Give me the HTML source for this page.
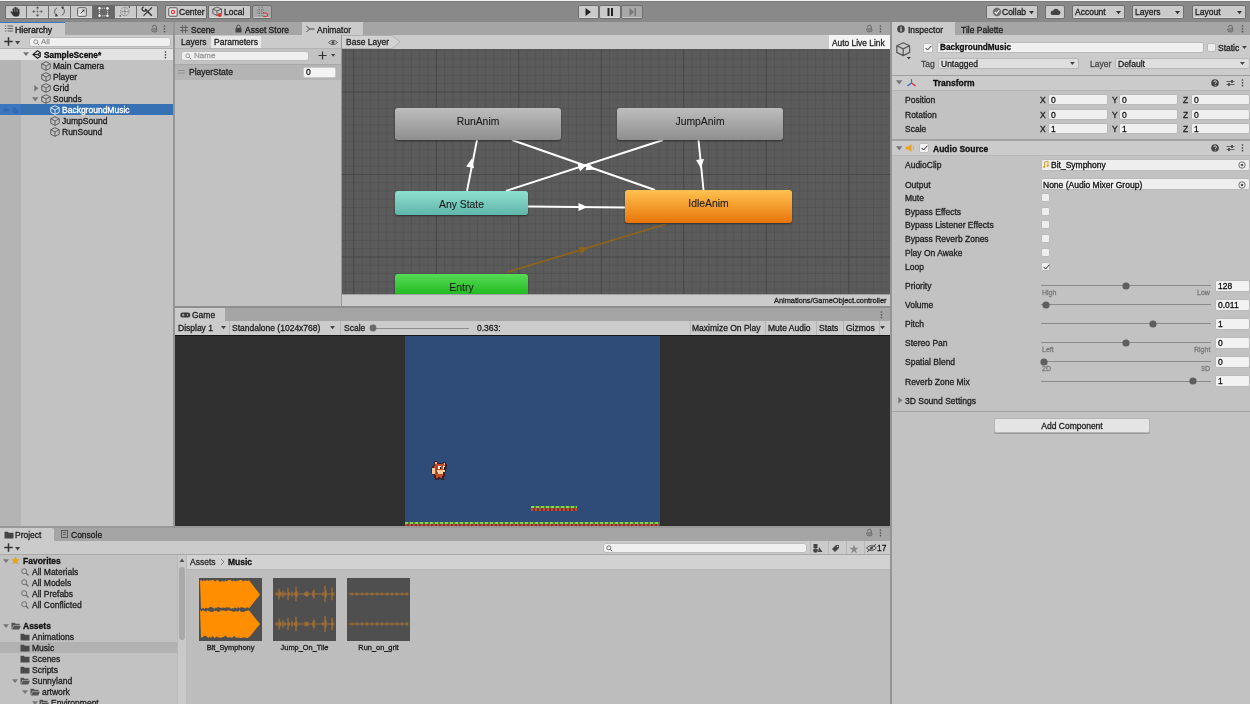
<!DOCTYPE html>
<html><head><meta charset="utf-8">
<style>
*{margin:0;padding:0;box-sizing:border-box}
html,body{width:1250px;height:704px;overflow:hidden;background:#c2c2c2;font-family:"Liberation Sans",sans-serif;font-size:8.5px;color:#111}
.a{position:absolute}
.t{position:absolute;white-space:nowrap;line-height:10px;-webkit-text-stroke:0.3px currentColor;will-change:transform}
svg{position:absolute;overflow:visible}
</style></head><body>
<div class="a" style="left:0;top:0;width:1250px;height:704px;background:#c2c2c2;overflow:hidden">

<div class="a" style="left:0px;top:0px;width:1250px;height:22px;background:#898989;"></div>
<div class="a" style="left:0px;top:0px;width:1250px;height:1.3px;background:#f2f2f2;"></div>
<div class="a" style="left:0px;top:1.3px;width:1250px;height:1px;background:#7c7c7c;"></div>
<div class="a" style="left:5px;top:5px;width:153px;height:14px;background:#cacaca;border:1px solid #6f6f6f;border-radius:2px;box-shadow:inset 0 -1px 0 rgba(255,255,255,0.35)"></div>
<div class="a" style="left:92px;top:5px;width:22px;height:14px;background:#686868;"></div>
<div class="a" style="left:26px;top:5px;width:1px;height:14px;background:#6f6f6f;"></div>
<div class="a" style="left:48px;top:5px;width:1px;height:14px;background:#6f6f6f;"></div>
<div class="a" style="left:70px;top:5px;width:1px;height:14px;background:#6f6f6f;"></div>
<div class="a" style="left:92px;top:5px;width:1px;height:14px;background:#6f6f6f;"></div>
<div class="a" style="left:114px;top:5px;width:1px;height:14px;background:#6f6f6f;"></div>
<div class="a" style="left:136px;top:5px;width:1px;height:14px;background:#6f6f6f;"></div>
<svg style="left:10px;top:6px" width="11" height="11" viewBox="0 0 11 11"><g fill="#333"><rect x="2.6" y="2.2" width="1.5" height="6" rx="0.75"/><rect x="4.4" y="0.8" width="1.5" height="6" rx="0.75"/><rect x="6.2" y="1.3" width="1.5" height="6" rx="0.75"/><rect x="8" y="2.8" width="1.4" height="5" rx="0.7"/><path d="M2.6 6 H9.4 V8 C9.4 9.6 8.4 10.6 6.6 10.6 H5 C4 10.6 3.3 10.1 2.8 9.3 L0.6 6.2 C0.3 5.6 1 5.1 1.5 5.5 L2.6 6.6Z"/></g></svg>
<svg style="left:32px;top:6px" width="11" height="11" viewBox="0 0 11 11"><g stroke="#666" stroke-width="0.8" stroke-dasharray="0.9 0.7" fill="none"><path d="M5.5 2 V9 M2 5.5 H9"/></g><g fill="#555"><path d="M5.5 0.2 L3.9 2.2 H7.1Z M5.5 10.8 L3.9 8.8 H7.1Z M0.2 5.5 L2.2 3.9 V7.1Z M10.8 5.5 L8.8 3.9 V7.1Z"/></g></svg>
<svg style="left:54px;top:6px" width="11" height="11" viewBox="0 0 11 11"><g fill="none" stroke="#555" stroke-width="0.9"><path d="M3.2 1.8 A4.3 4.3 0 0 0 2.2 9.2"/><path d="M7.8 9.2 A4.3 4.3 0 0 0 8.8 1.8"/></g><path d="M1 10.5 L4 10.2 L2.2 7.6Z M10 0.5 L7 0.8 L8.8 3.4Z" fill="#333"/></svg>
<svg style="left:77px;top:7px" width="10" height="10" viewBox="0 0 10 10"><rect x="0.6" y="0.6" width="8.8" height="8.8" rx="1.6" fill="#d8d8d8" stroke="#666" stroke-width="1"/><path d="M3.5 6.5 L7 3" stroke="#444" stroke-width="0.9"/><path d="M7.6 2.4 L5 2.8 L7.2 5Z" fill="#333"/><rect x="1.8" y="6.6" width="1.8" height="1.8" fill="#f4f4f4"/></svg>
<svg style="left:98px;top:7px" width="11" height="10" viewBox="0 0 11 10"><g stroke="#e8e8e8" stroke-width="0.9" stroke-dasharray="1.2 1" fill="none"><rect x="1.5" y="1.2" width="8" height="7.6"/></g><g fill="#f4f4f4"><circle cx="1.5" cy="1.2" r="1.2"/><circle cx="9.5" cy="1.2" r="1.2"/><circle cx="1.5" cy="8.8" r="1.2"/><circle cx="9.5" cy="8.8" r="1.2"/></g></svg>
<svg style="left:119px;top:6px" width="12" height="11" viewBox="0 0 12 11"><g fill="none" stroke="#666" stroke-width="0.8"><circle cx="5.8" cy="5.5" r="4.2" stroke-dasharray="1.3 0.9"/><path d="M5.8 2.5 V8.5 M2.8 5.5 H8.8" stroke-dasharray="1 0.6"/></g><path d="M11.2 0.2 L9.2 0.8 L10.6 2.2Z M0.4 10.8 L2.4 10.2 L1 8.8Z" fill="#444"/></svg>
<svg style="left:142px;top:6px" width="11" height="11" viewBox="0 0 11 11"><path d="M3 3 L9.8 9.8" stroke="#333" stroke-width="1.5"/><path d="M1.6 0.8 A2.2 2.2 0 1 0 4.4 3.4" fill="none" stroke="#333" stroke-width="1.3"/><path d="M9.6 1 L10.4 1.8 L2.6 9.6 L1 10.4 L1.8 8.8Z" fill="#333"/></svg>
<div class="a" style="left:165px;top:5px;width:42px;height:14px;background:#cacaca;border:1px solid #6f6f6f;border-radius:2px;box-shadow:inset 0 -1px 0 rgba(255,255,255,0.35)"></div>
<div class="a" style="left:208px;top:5px;width:43px;height:14px;background:#cacaca;border:1px solid #6f6f6f;border-radius:2px;box-shadow:inset 0 -1px 0 rgba(255,255,255,0.35)"></div>
<div class="a" style="left:252px;top:5px;width:20px;height:14px;background:#a9a9a9;border:1px solid #6f6f6f;border-radius:2px;box-shadow:inset 0 -1px 0 rgba(255,255,255,0.35)"></div>
<svg style="left:168px;top:7px" width="10" height="10" viewBox="0 0 10 10"><rect x="0.8" y="0.8" width="8.4" height="8.4" rx="1" fill="#e8e8e8" stroke="#555" stroke-width="1"/><circle cx="5" cy="5" r="2.2" fill="#d33"/><circle cx="5" cy="5" r="0.9" fill="#fff"/></svg>
<div class="t" style="left:179px;top:7px;font-size:8.5px;color:#1e1e1e;">Center</div>
<svg style="left:212px;top:6px" width="12" height="12" viewBox="0 0 12 12"><g fill="none" stroke="#555" stroke-width="0.9"><path d="M5 1 L9.5 3 V7.5 L5 9.5 L0.8 7.5 V3 Z M0.8 3 L5 5 L9.5 3 M5 5 V9.5"/></g><circle cx="7.8" cy="9" r="2" fill="#d33"/></svg>
<div class="t" style="left:224px;top:7px;font-size:8.5px;color:#1e1e1e;">Local</div>
<svg style="left:257px;top:7px" width="12" height="10" viewBox="0 0 12 10"><g stroke="#666" stroke-width="0.8" stroke-dasharray="1 1" fill="none"><path d="M2 0 V9 M5 0 V9 M0 3 H8 M0 6 H8"/></g><path d="M6 6 H9 A1.8 1.8 0 0 1 9 9.6 H6" fill="none" stroke="#d33" stroke-width="1"/></svg>
<div class="a" style="left:578px;top:5px;width:21px;height:14px;background:#cacaca;border:1px solid #6f6f6f;border-radius:2px;box-shadow:inset 0 -1px 0 rgba(255,255,255,0.35)"></div>
<div class="a" style="left:599px;top:5px;width:22px;height:14px;background:#cacaca;border:1px solid #6f6f6f;border-radius:2px;box-shadow:inset 0 -1px 0 rgba(255,255,255,0.35)"></div>
<div class="a" style="left:621px;top:5px;width:22px;height:14px;background:#a8a8a8;border:1px solid #6f6f6f;border-radius:2px;box-shadow:inset 0 -1px 0 rgba(255,255,255,0.35)"></div>
<svg style="left:585px;top:8px" width="7" height="8" viewBox="0 0 7 8"><path d="M0.5 0 L6 4 L0.5 8Z" fill="#222"/></svg>
<svg style="left:607px;top:8px" width="7" height="8" viewBox="0 0 7 8"><rect x="0.5" y="0" width="2" height="8" fill="#222"/><rect x="4" y="0" width="2" height="8" fill="#222"/></svg>
<svg style="left:629px;top:8px" width="8" height="8" viewBox="0 0 8 8"><path d="M0.5 0 L5 4 L0.5 8Z" fill="#777"/><rect x="5.5" y="0" width="1.5" height="8" fill="#777"/></svg>
<div class="a" style="left:986px;top:5px;width:52px;height:14px;background:#cacaca;border:1px solid #6f6f6f;border-radius:2px;box-shadow:inset 0 -1px 0 rgba(255,255,255,0.35)"></div>
<div class="a" style="left:1045px;top:5px;width:20px;height:14px;background:#cacaca;border:1px solid #6f6f6f;border-radius:2px;box-shadow:inset 0 -1px 0 rgba(255,255,255,0.35)"></div>
<div class="a" style="left:1072px;top:5px;width:53px;height:14px;background:#cacaca;border:1px solid #6f6f6f;border-radius:2px;box-shadow:inset 0 -1px 0 rgba(255,255,255,0.35)"></div>
<div class="a" style="left:1132px;top:5px;width:52px;height:14px;background:#cacaca;border:1px solid #6f6f6f;border-radius:2px;box-shadow:inset 0 -1px 0 rgba(255,255,255,0.35)"></div>
<div class="a" style="left:1192px;top:5px;width:54px;height:14px;background:#cacaca;border:1px solid #6f6f6f;border-radius:2px;box-shadow:inset 0 -1px 0 rgba(255,255,255,0.35)"></div>
<svg style="left:992px;top:7px" width="10" height="10" viewBox="0 0 10 10"><circle cx="5" cy="5" r="4.2" fill="#6e6e6e"/><path d="M2.8 5 L4.4 6.7 L7.3 3.3" fill="none" stroke="#f4f4f4" stroke-width="1.2"/></svg>
<div class="t" style="left:1002px;top:7px;font-size:8.5px;color:#1e1e1e;">Collab</div>
<svg style="left:1029px;top:10px" width="5.0" height="5.0" viewBox="0 0 5.0 5.0"><path d="M0 1.0 L5.0 1.0 L2.5 4.25 Z" fill="#333"/></svg>
<svg style="left:1050px;top:8px" width="11" height="8" viewBox="0 0 11 8"><path d="M2.5 7 H8.5 A2.3 2.3 0 0 0 8.8 2.5 A3.2 3.2 0 0 0 3 2.8 A2.1 2.1 0 0 0 2.5 7Z" fill="#444"/></svg>
<div class="t" style="left:1075px;top:7px;font-size:8.5px;color:#1e1e1e;">Account</div>
<svg style="left:1116px;top:10px" width="5.0" height="5.0" viewBox="0 0 5.0 5.0"><path d="M0 1.0 L5.0 1.0 L2.5 4.25 Z" fill="#333"/></svg>
<div class="t" style="left:1135px;top:7px;font-size:8.5px;color:#1e1e1e;">Layers</div>
<svg style="left:1175px;top:10px" width="5.0" height="5.0" viewBox="0 0 5.0 5.0"><path d="M0 1.0 L5.0 1.0 L2.5 4.25 Z" fill="#333"/></svg>
<div class="t" style="left:1195px;top:7px;font-size:8.5px;color:#1e1e1e;">Layout</div>
<svg style="left:1237px;top:10px" width="5.0" height="5.0" viewBox="0 0 5.0 5.0"><path d="M0 1.0 L5.0 1.0 L2.5 4.25 Z" fill="#333"/></svg>
<div class="a" style="left:0px;top:22px;width:173px;height:505px;background:#c2c2c2;"></div>
<div class="a" style="left:0px;top:22px;width:173px;height:13px;background:#a5a5a5;"></div>
<div class="a" style="left:0px;top:22px;width:65px;height:13px;background:#cbcbcb;"></div>
<div class="a" style="left:0px;top:22px;width:65px;height:1px;background:#3b78c4;"></div>
<svg style="left:5px;top:25px" width="8" height="7" viewBox="0 0 8 7"><g stroke="#555" stroke-width="0.9"><path d="M0 1 H1.2 M2.5 1 H8 M0 3.5 H1.2 M2.5 3.5 H8 M0 6 H1.2 M2.5 6 H8"/></g></svg>
<div class="t" style="left:15px;top:25px;font-size:8.7px;color:#111;-webkit-text-stroke:0.28px #111">Hierarchy</div>
<svg style="left:151px;top:23.5px" width="7" height="9" viewBox="0 0 7 9"><path d="M1.4 3.2 a2 1.9 0 0 1 4 0 V5.2" fill="none" stroke="#666" stroke-width="1"/><path d="M0.9 4.9 H5.9 V6.4 a1.6 1.4 0 0 1 -1.6 1.4 H2.5 a1.6 1.4 0 0 1 -1.6 -1.4 Z" fill="none" stroke="#666" stroke-width="1"/><path d="M2.2 6.3 H4.6" stroke="#666" stroke-width="0.8"/></svg>
<svg style="left:163px;top:24px" width="3" height="10" viewBox="0 0 3 10"><circle cx="1.5" cy="2" r="0.85" fill="#555"/><circle cx="1.5" cy="4.8" r="0.85" fill="#555"/><circle cx="1.5" cy="7.6" r="0.85" fill="#555"/></svg>
<div class="a" style="left:0px;top:35px;width:173px;height:13px;background:#cbcbcb;"></div>
<svg style="left:3.5px;top:37px" width="9" height="9" viewBox="0 0 9 9"><path d="M4.5 0.3 V8.7 M0.3 4.5 H8.7" stroke="#333" stroke-width="1.5"/></svg>
<svg style="left:15px;top:39.5px" width="5.2" height="5.2" viewBox="0 0 5.2 5.2"><path d="M0 1.04 L5.2 1.04 L2.6 4.42 Z" fill="#444"/></svg>
<div class="a" style="left:29px;top:37px;width:142px;height:10px;background:#f0f0f0;border:1px solid #b9b9b9;border-radius:3px"></div>
<svg style="left:33px;top:39px" width="7" height="7" viewBox="0 0 7 7"><circle cx="2.8" cy="2.8" r="2" fill="none" stroke="#888" stroke-width="0.9"/><path d="M4.3 4.3 L6.3 6.3" stroke="#888" stroke-width="1"/></svg>
<div class="t" style="left:41px;top:37px;font-size:8px;color:#9a9a9a;">All</div>
<div class="a" style="left:0px;top:48px;width:173px;height:1px;background:#b0b0b0;"></div>
<div class="a" style="left:0px;top:49px;width:173px;height:11px;background:#e3e3e3;"></div>
<svg style="left:23px;top:51px" width="6" height="6" viewBox="0 0 6 6"><path d="M0 1.2000000000000002 L6 1.2000000000000002 L3 5.1 Z" fill="#777"/></svg>
<svg style="left:32px;top:50px" width="9" height="9" viewBox="0 0 9 9"><g fill="none" stroke="#222" stroke-width="1.1"><path d="M5.5 0.8 L8.3 2.6 V6.4 L5.5 8.2 L1 4.5Z"/><path d="M1 4.5 H5.5 L8.3 2.6 M5.5 4.5 L8.3 6.4"/></g></svg>
<div class="t" style="left:44px;top:50px;font-size:8.3px;color:#111;font-weight:bold;">SampleScene*</div>
<svg style="left:164px;top:50px" width="3" height="10" viewBox="0 0 3 10"><circle cx="1.5" cy="2" r="0.85" fill="#444"/><circle cx="1.5" cy="4.8" r="0.85" fill="#444"/><circle cx="1.5" cy="7.6" r="0.85" fill="#444"/></svg>
<div class="a" style="left:0px;top:60px;width:21px;height:467px;background:#b4b4b4;"></div>
<svg style="left:41px;top:61px" width="10" height="10" viewBox="0 0 10 10"><g fill="none" stroke="#555" stroke-width="0.9" stroke-linejoin="round"><path d="M5.0 0.7 L9.2 2.7 L9.2 7.3 L5.0 9.3 L0.8 7.3 L0.8 2.7 Z"/><path d="M0.8 2.7 L5.0 5.0 L9.2 2.7 M5.0 5.0 L5.0 9.3"/></g></svg>
<div class="t" style="left:53px;top:61px;font-size:8.5px;color:#1c1c1c;">Main Camera</div>
<svg style="left:41px;top:72px" width="10" height="10" viewBox="0 0 10 10"><g fill="none" stroke="#555" stroke-width="0.9" stroke-linejoin="round"><path d="M5.0 0.7 L9.2 2.7 L9.2 7.3 L5.0 9.3 L0.8 7.3 L0.8 2.7 Z"/><path d="M0.8 2.7 L5.0 5.0 L9.2 2.7 M5.0 5.0 L5.0 9.3"/></g></svg>
<div class="t" style="left:53px;top:72px;font-size:8.5px;color:#1c1c1c;">Player</div>
<svg style="left:41px;top:83px" width="10" height="10" viewBox="0 0 10 10"><g fill="none" stroke="#555" stroke-width="0.9" stroke-linejoin="round"><path d="M5.0 0.7 L9.2 2.7 L9.2 7.3 L5.0 9.3 L0.8 7.3 L0.8 2.7 Z"/><path d="M0.8 2.7 L5.0 5.0 L9.2 2.7 M5.0 5.0 L5.0 9.3"/></g></svg>
<div class="t" style="left:53px;top:83px;font-size:8.5px;color:#1c1c1c;">Grid</div>
<svg style="left:33px;top:84.5px" width="6.4" height="6.4" viewBox="0 0 6.4 6.4"><path d="M1.2800000000000002 0 L5.44 3.2 L1.2800000000000002 6.4 Z" fill="#777"/></svg>
<svg style="left:41px;top:94px" width="10" height="10" viewBox="0 0 10 10"><g fill="none" stroke="#555" stroke-width="0.9" stroke-linejoin="round"><path d="M5.0 0.7 L9.2 2.7 L9.2 7.3 L5.0 9.3 L0.8 7.3 L0.8 2.7 Z"/><path d="M0.8 2.7 L5.0 5.0 L9.2 2.7 M5.0 5.0 L5.0 9.3"/></g></svg>
<div class="t" style="left:53px;top:94px;font-size:8.5px;color:#1c1c1c;">Sounds</div>
<svg style="left:32px;top:95.5px" width="6.4" height="6.4" viewBox="0 0 6.4 6.4"><path d="M0 1.2800000000000002 L6.4 1.2800000000000002 L3.2 5.44 Z" fill="#777"/></svg>
<div class="a" style="left:0px;top:104px;width:173px;height:11px;background:#3671b4;"></div>
<div class="a" style="left:0px;top:104px;width:21px;height:11px;background:#3b77c0;"></div>
<svg style="left:1.5px;top:107px" width="8" height="6" viewBox="0 0 8 6"><path d="M0.5 3 Q4 -0.5 7.5 3 Q4 6.5 0.5 3Z" fill="#3569ad"/></svg>
<svg style="left:12px;top:106px" width="7" height="8" viewBox="0 0 7 8"><path d="M1.5 2 Q3 0.5 4 2 L4 3.5 Q6 3 6.5 5 L6 7.5 H2.5 L1 5 Z" fill="#3569ad"/></svg>
<svg style="left:50px;top:105px" width="10" height="10" viewBox="0 0 10 10"><g fill="none" stroke="#e8f0ff" stroke-width="0.9" stroke-linejoin="round"><path d="M5.0 0.7 L9.2 2.7 L9.2 7.3 L5.0 9.3 L0.8 7.3 L0.8 2.7 Z"/><path d="M0.8 2.7 L5.0 5.0 L9.2 2.7 M5.0 5.0 L5.0 9.3"/></g></svg>
<div class="t" style="left:62px;top:105px;font-size:8.5px;color:#ffffff;">BackgroundMusic</div>
<svg style="left:50px;top:116px" width="10" height="10" viewBox="0 0 10 10"><g fill="none" stroke="#555" stroke-width="0.9" stroke-linejoin="round"><path d="M5.0 0.7 L9.2 2.7 L9.2 7.3 L5.0 9.3 L0.8 7.3 L0.8 2.7 Z"/><path d="M0.8 2.7 L5.0 5.0 L9.2 2.7 M5.0 5.0 L5.0 9.3"/></g></svg>
<div class="t" style="left:62px;top:116px;font-size:8.5px;color:#1c1c1c;">JumpSound</div>
<svg style="left:50px;top:127px" width="10" height="10" viewBox="0 0 10 10"><g fill="none" stroke="#555" stroke-width="0.9" stroke-linejoin="round"><path d="M5.0 0.7 L9.2 2.7 L9.2 7.3 L5.0 9.3 L0.8 7.3 L0.8 2.7 Z"/><path d="M0.8 2.7 L5.0 5.0 L9.2 2.7 M5.0 5.0 L5.0 9.3"/></g></svg>
<div class="t" style="left:62px;top:127px;font-size:8.5px;color:#1c1c1c;">RunSound</div>
<div class="a" style="left:175px;top:22px;width:715px;height:13px;background:#a5a5a5;"></div>
<svg style="left:180px;top:25px" width="8" height="8" viewBox="0 0 8 8"><g stroke="#555" stroke-width="0.8"><path d="M2.5 0 V8 M5.5 0 V8 M0 2.5 H8 M0 5.5 H8"/></g></svg>
<div class="t" style="left:191px;top:24.8px;font-size:8.5px;color:#1e1e1e;">Scene</div>
<svg style="left:235px;top:24px" width="7" height="9" viewBox="0 0 7 9"><path d="M1.8 4 V2.8 a1.7 1.7 0 0 1 3.4 0 V4" fill="none" stroke="#444" stroke-width="1"/><rect x="0.5" y="4" width="6" height="4.6" rx="0.7" fill="#444"/></svg>
<div class="t" style="left:245px;top:24.8px;font-size:8.5px;color:#1e1e1e;">Asset Store</div>
<div class="a" style="left:302px;top:22px;width:61px;height:13px;background:#cbcbcb;"></div>
<svg style="left:306px;top:25px" width="9" height="8" viewBox="0 0 9 8"><g stroke="#333" stroke-width="0.9" fill="none"><path d="M0.5 1 L3.5 4 L0.5 7 M3.5 4 H8.5"/></g></svg>
<div class="t" style="left:317px;top:24.8px;font-size:8.5px;color:#1e1e1e;">Animator</div>
<svg style="left:866px;top:23.5px" width="7" height="9" viewBox="0 0 7 9"><path d="M1.4 3.2 a2 1.9 0 0 1 4 0 V5.2" fill="none" stroke="#666" stroke-width="1"/><path d="M0.9 4.9 H5.9 V6.4 a1.6 1.4 0 0 1 -1.6 1.4 H2.5 a1.6 1.4 0 0 1 -1.6 -1.4 Z" fill="none" stroke="#666" stroke-width="1"/><path d="M2.2 6.3 H4.6" stroke="#666" stroke-width="0.8"/></svg>
<svg style="left:879px;top:24px" width="3" height="10" viewBox="0 0 3 10"><circle cx="1.5" cy="2" r="0.85" fill="#555"/><circle cx="1.5" cy="4.8" r="0.85" fill="#555"/><circle cx="1.5" cy="7.6" r="0.85" fill="#555"/></svg>
<div class="a" style="left:175px;top:35px;width:715px;height:14px;background:#cbcbcb;"></div>
<div class="a" style="left:175px;top:36px;width:36px;height:12px;background:#c6c6c6;"></div>
<div class="t" style="left:181px;top:37px;font-size:8.5px;color:#1e1e1e;">Layers</div>
<div class="a" style="left:211px;top:36px;width:50px;height:12px;background:#e9e9e9;"></div>
<div class="t" style="left:214px;top:37px;font-size:8.5px;color:#1e1e1e;">Parameters</div>
<svg style="left:328px;top:39px" width="10" height="7" viewBox="0 0 10 7"><path d="M0.5 3.5 Q5 -1 9.5 3.5 Q5 8 0.5 3.5Z" fill="none" stroke="#555" stroke-width="0.9"/><circle cx="5" cy="3.5" r="1.6" fill="#555"/></svg>
<div class="a" style="left:341px;top:35px;width:1px;height:272px;background:#999999;"></div>
<svg style="left:342px;top:35px" width="60" height="14" viewBox="0 0 60 14"><path d="M0 0.5 H50 L58 7 L50 13.5 H0" fill="#d2d2d2" stroke="#a9a9a9" stroke-width="0.8"/></svg>
<div class="t" style="left:346px;top:37px;font-size:8.5px;color:#1e1e1e;">Base Layer</div>
<div class="a" style="left:829px;top:35px;width:61px;height:14px;background:#f4f4f4;"></div>
<div class="t" style="left:832px;top:37.7px;font-size:8.4px;color:#1e1e1e;">Auto Live Link</div>
<div class="a" style="left:175px;top:48px;width:166px;height:1px;background:#b3b3b3;"></div>
<div class="a" style="left:181px;top:51px;width:128px;height:10px;background:#efefef;border:1px solid #bdbdbd;border-radius:3px"></div>
<svg style="left:185px;top:53px" width="7" height="7" viewBox="0 0 7 7"><circle cx="2.8" cy="2.8" r="2" fill="none" stroke="#888" stroke-width="0.9"/><path d="M4.3 4.3 L6.3 6.3" stroke="#888" stroke-width="1"/></svg>
<div class="t" style="left:194px;top:51px;font-size:8px;color:#9a9a9a;">Name</div>
<svg style="left:318px;top:51px" width="9" height="9" viewBox="0 0 9 9"><path d="M4.5 0.5 V8.5 M0.5 4.5 H8.5" stroke="#333" stroke-width="1.2"/></svg>
<svg style="left:331px;top:53px" width="4.4" height="4.4" viewBox="0 0 4.4 4.4"><path d="M0 0.8800000000000001 L4.4 0.8800000000000001 L2.2 3.74 Z" fill="#444"/></svg>
<div class="a" style="left:175px;top:64.5px;width:166px;height:15.5px;background:#b4b4b4;"></div>
<div class="a" style="left:175px;top:64px;width:166px;height:0.8px;background:#a8a8a8;"></div>
<svg style="left:178px;top:70px" width="7" height="4" viewBox="0 0 7 4"><path d="M0 0.5 H7 M0 3 H7" stroke="#8c8c8c" stroke-width="0.9"/></svg>
<div class="t" style="left:189px;top:67px;font-size:8.5px;color:#1e1e1e;">PlayerState</div>
<div class="a" style="left:303px;top:67px;width:33px;height:11px;background:#f4f4f4;border:1px solid #c8c8c8;border-radius:2px"></div>
<div class="t" style="left:306px;top:67px;font-size:8.5px;color:#111;">0</div>
<div class="a" style="left:342px;top:49px;width:548px;height:245px;background-color:#5b5b5b;
background-image:linear-gradient(to right,#484848 1px,transparent 1px),linear-gradient(to bottom,#484848 1px,transparent 1px),linear-gradient(to right,#535353 1px,transparent 1px),linear-gradient(to bottom,#535353 1px,transparent 1px);
background-size:82.5px 82.5px,82.5px 82.5px,8.25px 8.25px,8.25px 8.25px;
background-position:11.30px 0,0 42.50px,11.30px 0,0 42.50px"></div>
<svg style="left:0;top:0" width="1250" height="704"><line x1="508" y1="272" x2="666" y2="224" stroke="#8f6418" stroke-width="1.7"/><path d="M588.3 247.7 L580.9 254.1 L578.5 246.5Z" fill="#8f6418"/><line x1="467" y1="191" x2="477" y2="140" stroke="#ffffff" stroke-width="1.9"/><path d="M471.9 158.6 L474.1 168.2 L466.2 166.6Z" fill="#ffffff"/><line x1="512" y1="140" x2="655" y2="190" stroke="#ffffff" stroke-width="1.9"/><path d="M595.2 169.5 L585.4 170.3 L588.1 162.7Z" fill="#ffffff"/><line x1="506" y1="191" x2="663" y2="140" stroke="#ffffff" stroke-width="1.9"/><path d="M587.3 164.6 L580.0 171.2 L577.5 163.6Z" fill="#ffffff"/><line x1="528" y1="206.5" x2="625" y2="207.5" stroke="#ffffff" stroke-width="1.9"/><path d="M587.5 207.0 L578.5 211.0 L578.5 203.0Z" fill="#ffffff"/><line x1="698.5" y1="140" x2="703.5" y2="190" stroke="#ffffff" stroke-width="1.9"/><path d="M700.9 168.5 L696.1 159.9 L704.0 159.1Z" fill="#ffffff"/></svg>
<div class="a" style="left:395px;top:108px;width:166px;height:32px;background:linear-gradient(#bdbdbd,#8f8f8f);border-radius:3px;box-shadow:0 1px 2px rgba(0,0,0,0.45)"></div>
<div class="t" style="left:395px;width:166px;text-align:center;top:116.5px;font-size:10.4px;color:#1a1a1a;-webkit-text-stroke:0.1px #1a1a1a">RunAnim</div>
<div class="a" style="left:617px;top:108px;width:166px;height:32px;background:linear-gradient(#bdbdbd,#8f8f8f);border-radius:3px;box-shadow:0 1px 2px rgba(0,0,0,0.45)"></div>
<div class="t" style="left:617px;width:166px;text-align:center;top:116.5px;font-size:10.4px;color:#1a1a1a;-webkit-text-stroke:0.1px #1a1a1a">JumpAnim</div>
<div class="a" style="left:395px;top:191px;width:133px;height:24px;background:linear-gradient(#8fdfcf,#5fb6aa);border-radius:3px;box-shadow:0 1px 2px rgba(0,0,0,0.45)"></div>
<div class="t" style="left:395px;width:133px;text-align:center;top:199.5px;font-size:10.4px;color:#1a1a1a;-webkit-text-stroke:0.1px #1a1a1a">Any State</div>
<div class="a" style="left:625px;top:190px;width:167px;height:33px;background:linear-gradient(#ffc24f,#e8740a);border-radius:3px;box-shadow:0 1px 2px rgba(0,0,0,0.45)"></div>
<div class="t" style="left:625px;width:167px;text-align:center;top:198.5px;font-size:10.4px;color:#1a1a1a;-webkit-text-stroke:0.1px #1a1a1a">IdleAnim</div>
<div class="a" style="left:395px;top:274px;width:133px;height:24px;background:linear-gradient(#56dc56,#18b418);border-radius:3px;box-shadow:0 1px 2px rgba(0,0,0,0.45)"></div>
<div class="t" style="left:395px;width:133px;text-align:center;top:282.5px;font-size:10.4px;color:#1a1a1a;-webkit-text-stroke:0.1px #1a1a1a">Entry</div>
<div class="a" style="left:342px;top:294px;width:548px;height:12.5px;background:#cbcbcb;"></div>
<div class="a" style="left:342px;top:294px;width:548px;height:0.6px;background:#a0a0a0;"></div>
<div class="t" style="right:363px;top:296.2px;font-size:7.4px;color:#222;">Animations/GameObject.controller</div>
<div class="a" style="left:175px;top:293px;width:166px;height:13px;background:#c2c2c2;"></div>
<div class="a" style="left:175px;top:306px;width:715px;height:2px;background:#8e8e8e;"></div>
<div class="a" style="left:175px;top:308px;width:715px;height:13px;background:#a5a5a5;"></div>
<div class="a" style="left:175px;top:308px;width:50px;height:13px;background:#cbcbcb;"></div>
<svg style="left:180px;top:311.5px" width="11" height="6" viewBox="0 0 11 6"><rect x="0.3" y="0.5" width="10" height="5" rx="2.5" fill="#3a3a3a"/><path d="M2 3 H4.5 M3.25 1.8 V4.2" stroke="#cbcbcb" stroke-width="0.8"/><circle cx="7.5" cy="3" r="0.8" fill="#cbcbcb"/></svg>
<div class="t" style="left:192px;top:310px;font-size:8.5px;color:#1e1e1e;">Game</div>
<svg style="left:880px;top:310px" width="3" height="10" viewBox="0 0 3 10"><circle cx="1.5" cy="2" r="0.85" fill="#555"/><circle cx="1.5" cy="4.8" r="0.85" fill="#555"/><circle cx="1.5" cy="7.6" r="0.85" fill="#555"/></svg>
<div class="a" style="left:175px;top:321px;width:715px;height:14px;background:#cbcbcb;"></div>
<div class="t" style="left:178px;top:323px;font-size:8.5px;color:#1e1e1e;">Display 1</div>
<svg style="left:221px;top:325px" width="5.0" height="5.0" viewBox="0 0 5.0 5.0"><path d="M0 1.0 L5.0 1.0 L2.5 4.25 Z" fill="#444"/></svg>
<div class="a" style="left:229px;top:321px;width:1px;height:14px;background:#b5b5b5;"></div>
<div class="t" style="left:232px;top:323px;font-size:8.5px;color:#1e1e1e;">Standalone (1024x768)</div>
<svg style="left:330px;top:325px" width="5.0" height="5.0" viewBox="0 0 5.0 5.0"><path d="M0 1.0 L5.0 1.0 L2.5 4.25 Z" fill="#444"/></svg>
<div class="a" style="left:340px;top:321px;width:1px;height:14px;background:#b5b5b5;"></div>
<div class="t" style="left:344px;top:323px;font-size:8.5px;color:#1e1e1e;">Scale</div>
<div class="a" style="left:373px;top:327.5px;width:96px;height:1px;background:#8e8e8e;"></div>
<svg style="left:369px;top:324px" width="8" height="8" viewBox="0 0 8 8"><circle cx="4" cy="4" r="3.4" fill="#6a6a6a"/></svg>
<div class="t" style="left:477px;top:323px;font-size:8.5px;color:#1e1e1e;">0.363:</div>
<div class="a" style="left:690px;top:321px;width:1px;height:14px;background:#b5b5b5;"></div>
<div class="a" style="left:765px;top:321px;width:1px;height:14px;background:#b5b5b5;"></div>
<div class="a" style="left:816px;top:321px;width:1px;height:14px;background:#b5b5b5;"></div>
<div class="a" style="left:843px;top:321px;width:1px;height:14px;background:#b5b5b5;"></div>
<div class="a" style="left:879px;top:321px;width:1px;height:14px;background:#b5b5b5;"></div>
<div class="t" style="left:692px;top:323px;font-size:8.5px;color:#1e1e1e;">Maximize On Play</div>
<div class="t" style="left:768px;top:323px;font-size:8.5px;color:#1e1e1e;">Mute Audio</div>
<div class="t" style="left:819px;top:323px;font-size:8.5px;color:#1e1e1e;">Stats</div>
<div class="t" style="left:846px;top:323px;font-size:8.5px;color:#1e1e1e;">Gizmos</div>
<svg style="left:880px;top:325px" width="5.0" height="5.0" viewBox="0 0 5.0 5.0"><path d="M0 1.0 L5.0 1.0 L2.5 4.25 Z" fill="#444"/></svg>
<div class="a" style="left:175px;top:335px;width:715px;height:191px;background:#303030;"></div>
<div class="a" style="left:175px;top:335px;width:715px;height:1px;background:#161616;"></div>
<div class="a" style="left:405px;top:336px;width:255px;height:190px;background:#2f4c79;"></div>
<div class="a" style="left:405px;top:521.5px;width:255px;height:4.5px;background:repeating-linear-gradient(90deg,#b34e42 0 2px,#842f2a 2px 4px)"></div>
<div class="a" style="left:405px;top:521.5px;width:255px;height:2.2px;background:repeating-linear-gradient(90deg,#86d052 0 3px,#4f8a34 3px 5px)"></div>
<div class="a" style="left:531px;top:506px;width:46px;height:5.4px;background:repeating-linear-gradient(90deg,#b34e42 0 2px,#842f2a 2px 4px)"></div>
<div class="a" style="left:531px;top:506px;width:46px;height:2.4px;background:repeating-linear-gradient(90deg,#86d052 0 3px,#4f8a34 3px 5px)"></div>
<svg style="left:430px;top:460px" width="18" height="22" viewBox="0 0 18 22"><g shape-rendering="crispEdges"><path d="M4 1 H7 V2 H8 V3 H13 V2 H16 V4 H17 V9 H16 V12 H15 V17 H14 V20 H11 V19 H9 V20 H5 V18 H4 V15 H2 V13 H1 V8 H2 V6 H4 Z" fill="#3b2232"/><path d="M5 2 H7 V4 H13 V3 H15 V9 H14 V12 H13 V16 H12 V18 H10 V17 H8 V18 H6 V15 H5 V13 H3 V8 H4 V6 H5 Z" fill="#c64b28"/><rect x="5" y="2" width="2" height="2" fill="#f0b58a"/><rect x="14" y="3" width="1" height="2" fill="#f0b58a"/><rect x="2" y="8" width="3" height="6" fill="#f5c89a"/><path d="M7 10 H15 V12 H13 V14 H8 V12 H7Z" fill="#f5cf9e"/><rect x="8" y="6" width="3" height="3" fill="#f4f4f4"/><rect x="9.5" y="6.5" width="1.5" height="2" fill="#111"/><rect x="13" y="6" width="2" height="3" fill="#f4f4f4"/><rect x="14" y="6.5" width="1" height="2" fill="#111"/><rect x="6" y="6" width="1" height="8" fill="#a23a22"/></g></svg>
<div class="a" style="left:0px;top:526px;width:890px;height:15px;background:#a5a5a5;"></div>
<div class="a" style="left:0px;top:526px;width:890px;height:1.8px;background:#989898;"></div>
<div class="a" style="left:0;top:528px;width:54px;height:13px;background:#cbcbcb;border-radius:0 2px 0 0"></div>
<svg style="left:4px;top:531px" width="10" height="8" viewBox="0 0 10 8"><path d="M0.5 0.8 H3.8 L4.8 1.8 H9.5 V7.5 H0.5 Z" fill="#444"/></svg>
<div class="t" style="left:15px;top:530px;font-size:8.5px;color:#1e1e1e;">Project</div>
<svg style="left:61px;top:530px" width="7" height="8" viewBox="0 0 7 8"><rect x="0.5" y="0.5" width="6" height="7" fill="none" stroke="#555" stroke-width="0.9"/><path d="M2 2.5 H5 M2 4.5 H5" stroke="#555" stroke-width="0.8"/></svg>
<div class="t" style="left:71px;top:530px;font-size:8.5px;color:#1e1e1e;">Console</div>
<svg style="left:866px;top:527.5px" width="7" height="9" viewBox="0 0 7 9"><path d="M1.4 3.2 a2 1.9 0 0 1 4 0 V5.2" fill="none" stroke="#666" stroke-width="1"/><path d="M0.9 4.9 H5.9 V6.4 a1.6 1.4 0 0 1 -1.6 1.4 H2.5 a1.6 1.4 0 0 1 -1.6 -1.4 Z" fill="none" stroke="#666" stroke-width="1"/><path d="M2.2 6.3 H4.6" stroke="#666" stroke-width="0.8"/></svg>
<svg style="left:879px;top:528px" width="3" height="10" viewBox="0 0 3 10"><circle cx="1.5" cy="2" r="0.85" fill="#555"/><circle cx="1.5" cy="4.8" r="0.85" fill="#555"/><circle cx="1.5" cy="7.6" r="0.85" fill="#555"/></svg>
<div class="a" style="left:0px;top:541px;width:890px;height:13px;background:#cbcbcb;"></div>
<svg style="left:3.5px;top:543px" width="9" height="9" viewBox="0 0 9 9"><path d="M4.5 0.3 V8.7 M0.3 4.5 H8.7" stroke="#333" stroke-width="1.5"/></svg>
<svg style="left:15px;top:545.5px" width="5.2" height="5.2" viewBox="0 0 5.2 5.2"><path d="M0 1.04 L5.2 1.04 L2.6 4.42 Z" fill="#444"/></svg>
<div class="a" style="left:603px;top:543px;width:204px;height:10px;background:#f0f0f0;border:1px solid #bcbcbc;border-radius:3px"></div>
<svg style="left:606px;top:545px" width="7" height="7" viewBox="0 0 7 7"><circle cx="2.8" cy="2.8" r="2" fill="none" stroke="#666" stroke-width="0.9"/><path d="M4.3 4.3 L6.3 6.3" stroke="#666" stroke-width="1"/></svg>
<div class="a" style="left:809.5px;top:541px;width:1px;height:13px;background:#b8b8b8;"></div>
<div class="a" style="left:827.5px;top:541px;width:1px;height:13px;background:#b8b8b8;"></div>
<div class="a" style="left:845.5px;top:541px;width:1px;height:13px;background:#b8b8b8;"></div>
<div class="a" style="left:863.5px;top:541px;width:1px;height:13px;background:#b8b8b8;"></div>
<svg style="left:813px;top:544px" width="11" height="9" viewBox="0 0 11 9"><rect x="0.5" y="0" width="4" height="4" fill="#444"/><circle cx="2.5" cy="6.5" r="2.3" fill="#444"/><path d="M6 3 L9.5 8 H5Z" fill="#444"/></svg>
<svg style="left:831px;top:544px" width="9" height="9" viewBox="0 0 9 9"><path d="M1 5 L5 1 H8 V4 L4 8Z" fill="#444"/><circle cx="6.5" cy="2.5" r="0.8" fill="#cbcbcb"/></svg>
<svg style="left:849px;top:543.5px" width="10" height="10" viewBox="0 0 10 10"><path d="M5 0.5 L6.2 3.8 L9.5 3.8 L6.8 5.9 L7.8 9.2 L5 7.2 L2.2 9.2 L3.2 5.9 L0.5 3.8 L3.8 3.8Z" fill="#8a8a8a"/></svg>
<svg style="left:866px;top:544px" width="11" height="8" viewBox="0 0 11 8"><path d="M0.5 4 Q5.5 -1 10.5 4 Q5.5 9 0.5 4Z" fill="none" stroke="#444" stroke-width="0.9"/><circle cx="5.5" cy="4" r="1.5" fill="#444"/><path d="M1 8 L10 0" stroke="#444" stroke-width="1"/></svg>
<div class="t" style="left:877px;top:543px;font-size:8.5px;color:#1e1e1e;">17</div>
<div class="a" style="left:0px;top:554px;width:890px;height:1px;background:#a9a9a9;"></div>
<div class="a" style="left:0px;top:555px;width:177px;height:149px;background:#c2c2c2;"></div>
<div class="a" style="left:177px;top:555px;width:10px;height:149px;background:#c9c9c9;"></div>
<svg style="left:179px;top:558px" width="6" height="5" viewBox="0 0 6 5"><path d="M0.5 4 L3 0.5 L5.5 4Z" fill="#555"/></svg>
<div class="a" style="left:178.8px;top:566.5px;width:6.6px;height:73px;background:#a9a9a9;border-radius:3.3px"></div>
<div class="a" style="left:177px;top:555px;width:0.8px;height:149px;background:#b9b9b9;"></div>
<div class="a" style="left:186px;top:555px;width:0.8px;height:149px;background:#b9b9b9;"></div>
<div class="a" style="left:187px;top:555px;width:703px;height:149px;background:#bdbdbd;"></div>
<div class="a" style="left:187px;top:555px;width:703px;height:14px;background:#d2d2d2;"></div>
<div class="a" style="left:187px;top:569px;width:703px;height:1px;background:#b5b5b5;"></div>
<div class="t" style="left:190px;top:557px;font-size:8.5px;color:#2a2a2a;">Assets</div>
<svg style="left:220px;top:558px" width="5" height="8" viewBox="0 0 5 8"><path d="M0.8 0.8 L4 4 L0.8 7.2" fill="none" stroke="#777" stroke-width="0.9"/></svg>
<div class="t" style="left:228px;top:557px;font-size:8.5px;color:#111;font-weight:bold;">Music</div>
<svg style="left:3px;top:558px" width="6" height="6" viewBox="0 0 6 6"><path d="M0 1.2000000000000002 L6 1.2000000000000002 L3 5.1 Z" fill="#777"/></svg>
<svg style="left:11px;top:556px" width="9" height="9" viewBox="0 0 9 9"><path d="M4.5 0.3 L5.8 3.2 L8.8 3.3 L6.5 5.3 L7.3 8.5 L4.5 6.8 L1.7 8.5 L2.5 5.3 L0.2 3.3 L3.2 3.2Z" fill="#e3a21a"/></svg>
<div class="t" style="left:23px;top:556px;font-size:8.5px;color:#111;font-weight:bold;">Favorites</div>
<svg style="left:21px;top:567.5px" width="8" height="8" viewBox="0 0 8 8"><circle cx="3.2" cy="3.2" r="2.5" fill="none" stroke="#666" stroke-width="0.9"/><path d="M5 5 L7.5 7.5" stroke="#666" stroke-width="1.1"/></svg>
<div class="t" style="left:32px;top:566.5px;font-size:8.5px;color:#1e1e1e;">All Materials</div>
<svg style="left:21px;top:578.5px" width="8" height="8" viewBox="0 0 8 8"><circle cx="3.2" cy="3.2" r="2.5" fill="none" stroke="#666" stroke-width="0.9"/><path d="M5 5 L7.5 7.5" stroke="#666" stroke-width="1.1"/></svg>
<div class="t" style="left:32px;top:577.5px;font-size:8.5px;color:#1e1e1e;">All Models</div>
<svg style="left:21px;top:589.5px" width="8" height="8" viewBox="0 0 8 8"><circle cx="3.2" cy="3.2" r="2.5" fill="none" stroke="#666" stroke-width="0.9"/><path d="M5 5 L7.5 7.5" stroke="#666" stroke-width="1.1"/></svg>
<div class="t" style="left:32px;top:588.5px;font-size:8.5px;color:#1e1e1e;">All Prefabs</div>
<svg style="left:21px;top:600.5px" width="8" height="8" viewBox="0 0 8 8"><circle cx="3.2" cy="3.2" r="2.5" fill="none" stroke="#666" stroke-width="0.9"/><path d="M5 5 L7.5 7.5" stroke="#666" stroke-width="1.1"/></svg>
<div class="t" style="left:32px;top:599.5px;font-size:8.5px;color:#1e1e1e;">All Conflicted</div>
<svg style="left:3px;top:623px" width="6" height="6" viewBox="0 0 6 6"><path d="M0 1.2000000000000002 L6 1.2000000000000002 L3 5.1 Z" fill="#777"/></svg>
<svg style="left:11px;top:622px" width="10" height="8" viewBox="0 0 10 8"><path d="M0.5 0.8 H3.6 L4.6 1.8 H8.6 V3.2 H2.4 L0.5 7.4 Z" fill="#555"/><path d="M2.9 3.8 H9.9 L8.2 7.6 H0.9 Z" fill="#555"/></svg>
<div class="t" style="left:23px;top:621px;font-size:8.5px;color:#111;font-weight:bold;">Assets</div>
<div class="a" style="left:0px;top:642px;width:177px;height:11px;background:#b1b1b1;"></div>
<svg style="left:20px;top:632.6px" width="10" height="8" viewBox="0 0 10 8"><path d="M0.5 0.8 H3.8 L4.8 1.8 H9.5 V7.5 H0.5 Z" fill="#4a4a4a"/></svg>
<div class="t" style="left:32px;top:631.6px;font-size:8.5px;color:#1e1e1e;">Animations</div>
<svg style="left:20px;top:643.6px" width="10" height="8" viewBox="0 0 10 8"><path d="M0.5 0.8 H3.8 L4.8 1.8 H9.5 V7.5 H0.5 Z" fill="#4a4a4a"/></svg>
<div class="t" style="left:32px;top:642.6px;font-size:8.5px;color:#1e1e1e;">Music</div>
<svg style="left:20px;top:654.6px" width="10" height="8" viewBox="0 0 10 8"><path d="M0.5 0.8 H3.8 L4.8 1.8 H9.5 V7.5 H0.5 Z" fill="#4a4a4a"/></svg>
<div class="t" style="left:32px;top:653.6px;font-size:8.5px;color:#1e1e1e;">Scenes</div>
<svg style="left:20px;top:665.6px" width="10" height="8" viewBox="0 0 10 8"><path d="M0.5 0.8 H3.8 L4.8 1.8 H9.5 V7.5 H0.5 Z" fill="#4a4a4a"/></svg>
<div class="t" style="left:32px;top:664.6px;font-size:8.5px;color:#1e1e1e;">Scripts</div>
<svg style="left:12px;top:678px" width="6" height="6" viewBox="0 0 6 6"><path d="M0 1.2000000000000002 L6 1.2000000000000002 L3 5.1 Z" fill="#777"/></svg>
<svg style="left:20px;top:677px" width="10" height="8" viewBox="0 0 10 8"><path d="M0.5 0.8 H3.6 L4.6 1.8 H8.6 V3.2 H2.4 L0.5 7.4 Z" fill="#555"/><path d="M2.9 3.8 H9.9 L8.2 7.6 H0.9 Z" fill="#555"/></svg>
<div class="t" style="left:32px;top:676px;font-size:8.5px;color:#1e1e1e;">Sunnyland</div>
<svg style="left:22px;top:689px" width="6" height="6" viewBox="0 0 6 6"><path d="M0 1.2000000000000002 L6 1.2000000000000002 L3 5.1 Z" fill="#777"/></svg>
<svg style="left:29.5px;top:688px" width="10" height="8" viewBox="0 0 10 8"><path d="M0.5 0.8 H3.6 L4.6 1.8 H8.6 V3.2 H2.4 L0.5 7.4 Z" fill="#555"/><path d="M2.9 3.8 H9.9 L8.2 7.6 H0.9 Z" fill="#555"/></svg>
<div class="t" style="left:42px;top:687px;font-size:8.5px;color:#1e1e1e;">artwork</div>
<svg style="left:32px;top:700px" width="6" height="6" viewBox="0 0 6 6"><path d="M0 1.2000000000000002 L6 1.2000000000000002 L3 5.1 Z" fill="#777"/></svg>
<svg style="left:39px;top:699px" width="10" height="8" viewBox="0 0 10 8"><path d="M0.5 0.8 H3.6 L4.6 1.8 H8.6 V3.2 H2.4 L0.5 7.4 Z" fill="#555"/><path d="M2.9 3.8 H9.9 L8.2 7.6 H0.9 Z" fill="#555"/></svg>
<div class="t" style="left:51px;top:698px;font-size:8.5px;color:#1e1e1e;">Environment</div>
<div class="a" style="left:199px;top:578px;width:63px;height:63px;background:#4f4f4f"></div>
<svg style="left:199px;top:578px" width="63" height="63" viewBox="0 0 63 63"><path d="M1.0 2.5 L2.2 2.1 L3.4 3.2 L4.6 2.0 L5.8 3.0 L7.0 2.6 L8.2 1.9 L9.4 2.9 L10.6 1.9 L11.8 2.8 L13.0 2.0 L14.2 2.0 L15.4 2.7 L16.6 3.6 L17.8 2.1 L19.0 2.3 L20.2 3.2 L21.4 3.9 L22.6 3.1 L23.8 2.7 L25.0 3.9 L26.2 1.9 L27.4 3.7 L28.6 2.4 L29.8 2.1 L31.0 2.1 L32.2 2.5 L33.4 3.6 L34.6 2.2 L35.8 3.1 L37.0 3.2 L38.2 2.6 L39.4 3.0 L40.6 1.9 L41.8 1.9 L43.0 2.3 L44.2 3.3 L45.4 2.7 L46.6 2.5 L47.8 3.1 L49.0 2.8 L50.0 2.3 L61.0 16.4 L50.0 30.5 L50.0 30.3 L48.8 29.3 L47.6 29.5 L46.4 30.5 L45.2 29.7 L44.0 29.8 L42.8 29.1 L41.6 29.4 L40.4 30.4 L39.2 28.8 L38.0 30.7 L36.8 30.1 L35.6 29.3 L34.4 30.7 L33.2 29.9 L32.0 30.9 L30.8 29.5 L29.6 29.3 L28.4 29.7 L27.2 29.1 L26.0 30.3 L24.8 29.5 L23.6 29.7 L22.4 29.7 L21.2 30.0 L20.0 29.2 L18.8 28.9 L17.6 30.0 L16.4 29.5 L15.2 30.9 L14.0 29.5 L12.8 29.6 L11.6 28.8 L10.4 29.2 L9.2 30.4 L8.0 30.2 L6.8 29.5 L5.6 31.0 L4.4 30.0 L3.2 30.6 L2.0 30.7Z M1.0 32.1 L2.2 33.7 L3.4 32.3 L4.6 32.5 L5.8 32.9 L7.0 33.9 L8.2 32.2 L9.4 33.0 L10.6 33.2 L11.8 33.9 L13.0 33.8 L14.2 33.9 L15.4 32.6 L16.6 32.9 L17.8 32.8 L19.0 33.9 L20.2 34.1 L21.4 32.3 L22.6 32.4 L23.8 32.5 L25.0 32.5 L26.2 33.1 L27.4 33.3 L28.6 32.6 L29.8 32.0 L31.0 32.9 L32.2 32.8 L33.4 33.2 L34.6 34.1 L35.8 33.5 L37.0 33.1 L38.2 33.4 L39.4 33.5 L40.6 32.1 L41.8 34.0 L43.0 33.7 L44.2 33.9 L45.4 33.8 L46.6 32.9 L47.8 32.9 L49.0 32.2 L50.0 32.5 L61.0 46.0 L50.0 59.5 L50.0 58.6 L48.8 59.9 L47.6 59.9 L46.4 59.5 L45.2 59.6 L44.0 59.3 L42.8 59.9 L41.6 60.0 L40.4 59.7 L39.2 59.8 L38.0 59.2 L36.8 59.9 L35.6 58.1 L34.4 58.6 L33.2 59.7 L32.0 59.4 L30.8 59.2 L29.6 59.2 L28.4 59.7 L27.2 58.1 L26.0 57.8 L24.8 59.0 L23.6 58.9 L22.4 59.8 L21.2 59.8 L20.0 59.2 L18.8 59.4 L17.6 58.2 L16.4 59.6 L15.2 59.9 L14.0 57.9 L12.8 58.8 L11.6 59.7 L10.4 58.8 L9.2 59.9 L8.0 58.8 L6.8 57.8 L5.6 58.1 L4.4 58.5 L3.2 59.4 L2.0 59.2Z" fill="#ff8f00"/></svg>
<div class="t" style="left:189px;width:83px;text-align:center;top:643px;font-size:7.4px;color:#1e1e1e">Bit_Symphony</div>
<div class="a" style="left:273px;top:578px;width:63px;height:63px;background:#4f4f4f"></div>
<svg style="left:273px;top:578px" width="63" height="63" viewBox="0 0 63 63"><path d="M2 15.55 V16.45 M3 15.55 V16.45 M4 14.2 V17.8 M5 15.55 V16.45 M6 10.6 V21.4 M7 13.3 V18.7 M8 14.2 V17.8 M9 15.55 V16.45 M10 12.4 V19.6 M11 15.55 V16.45 M12 14.2 V17.8 M13 15.55 V16.45 M14 15.55 V16.45 M15 9.7 V22.3 M16 14.2 V17.8 M17 15.55 V16.45 M18 15.55 V16.45 M19 13.3 V18.7 M20 15.55 V16.45 M21 15.55 V16.45 M22 14.2 V17.8 M23 8.8 V23.2 M24 13.3 V18.7 M25 15.55 V16.45 M26 15.55 V16.45 M27 15.55 V16.45 M28 15.55 V16.45 M29 15.55 V16.45 M30 15.55 V16.45 M31 15.55 V16.45 M32 14.2 V17.8 M33 14.2 V17.8 M34 13.3 V18.7 M35 14.2 V17.8 M36 15.55 V16.45 M37 15.55 V16.45 M38 15.55 V16.45 M39 15.55 V16.45 M40 13.3 V18.7 M41 11.5 V20.5 M42 15.55 V16.45 M43 15.55 V16.45 M44 15.55 V16.45 M45 15.55 V16.45 M46 15.55 V16.45 M47 15.55 V16.45 M48 15.55 V16.45 M49 15.55 V16.45 M50 14.2 V17.8 M51 15.55 V16.45 M52 7.9 V24.1 M53 12.4 V19.6 M54 15.55 V16.45 M55 15.55 V16.45 M56 15.55 V16.45 M57 15.55 V16.45 M58 15.55 V16.45 M59 9.7 V22.3 M60 14.2 V17.8 M61 15.55 V16.45 M2 45.55 V46.45 M3 45.55 V46.45 M4 44.2 V47.8 M5 45.55 V46.45 M6 40.6 V51.4 M7 43.3 V48.7 M8 44.2 V47.8 M9 45.55 V46.45 M10 42.4 V49.6 M11 45.55 V46.45 M12 44.2 V47.8 M13 45.55 V46.45 M14 45.55 V46.45 M15 39.7 V52.3 M16 44.2 V47.8 M17 45.55 V46.45 M18 45.55 V46.45 M19 43.3 V48.7 M20 45.55 V46.45 M21 45.55 V46.45 M22 44.2 V47.8 M23 38.8 V53.2 M24 43.3 V48.7 M25 45.55 V46.45 M26 45.55 V46.45 M27 45.55 V46.45 M28 45.55 V46.45 M29 45.55 V46.45 M30 45.55 V46.45 M31 45.55 V46.45 M32 44.2 V47.8 M33 44.2 V47.8 M34 43.3 V48.7 M35 44.2 V47.8 M36 45.55 V46.45 M37 45.55 V46.45 M38 45.55 V46.45 M39 45.55 V46.45 M40 43.3 V48.7 M41 41.5 V50.5 M42 45.55 V46.45 M43 45.55 V46.45 M44 45.55 V46.45 M45 45.55 V46.45 M46 45.55 V46.45 M47 45.55 V46.45 M48 45.55 V46.45 M49 45.55 V46.45 M50 44.2 V47.8 M51 45.55 V46.45 M52 37.9 V54.1 M53 42.4 V49.6 M54 45.55 V46.45 M55 45.55 V46.45 M56 45.55 V46.45 M57 45.55 V46.45 M58 45.55 V46.45 M59 39.7 V52.3 M60 44.2 V47.8 M61 45.55 V46.45 " stroke="#e98c1c" stroke-width="0.8" opacity="0.85"/></svg>
<div class="t" style="left:263px;width:83px;text-align:center;top:643px;font-size:7.4px;color:#1e1e1e">Jump_On_Tile</div>
<div class="a" style="left:347px;top:578px;width:63px;height:63px;background:#4f4f4f"></div>
<svg style="left:347px;top:578px" width="63" height="63" viewBox="0 0 63 63"><path d="M2 15.55 V16.45 M3 15.55 V16.45 M4 15.55 V16.45 M5 14.4 V17.6 M6 15.55 V16.45 M7 15.55 V16.45 M8 15.55 V16.45 M9 15.55 V16.45 M10 14.4 V17.6 M11 15.55 V16.45 M12 15.55 V16.45 M13 15.55 V16.45 M14 15.55 V16.45 M15 14.4 V17.6 M16 15.55 V16.45 M17 15.55 V16.45 M18 15.55 V16.45 M19 15.55 V16.45 M20 14.4 V17.6 M21 15.55 V16.45 M22 15.55 V16.45 M23 15.55 V16.45 M24 15.55 V16.45 M25 14.4 V17.6 M26 15.55 V16.45 M27 15.55 V16.45 M28 15.55 V16.45 M29 15.55 V16.45 M30 14.4 V17.6 M31 15.55 V16.45 M32 15.55 V16.45 M33 15.55 V16.45 M34 15.55 V16.45 M35 14.4 V17.6 M36 15.55 V16.45 M37 15.55 V16.45 M38 15.55 V16.45 M39 15.55 V16.45 M40 14.4 V17.6 M41 15.55 V16.45 M42 15.55 V16.45 M43 15.55 V16.45 M44 15.55 V16.45 M45 14.4 V17.6 M46 15.55 V16.45 M47 15.55 V16.45 M48 15.55 V16.45 M49 15.55 V16.45 M50 14.4 V17.6 M51 15.55 V16.45 M52 15.55 V16.45 M53 15.55 V16.45 M54 15.55 V16.45 M55 14.4 V17.6 M56 15.55 V16.45 M57 15.55 V16.45 M58 15.55 V16.45 M59 15.55 V16.45 M60 14.4 V17.6 M61 15.55 V16.45 M2 45.55 V46.45 M3 45.55 V46.45 M4 45.55 V46.45 M5 44.4 V47.6 M6 45.55 V46.45 M7 45.55 V46.45 M8 45.55 V46.45 M9 45.55 V46.45 M10 44.4 V47.6 M11 45.55 V46.45 M12 45.55 V46.45 M13 45.55 V46.45 M14 45.55 V46.45 M15 44.4 V47.6 M16 45.55 V46.45 M17 45.55 V46.45 M18 45.55 V46.45 M19 45.55 V46.45 M20 44.4 V47.6 M21 45.55 V46.45 M22 45.55 V46.45 M23 45.55 V46.45 M24 45.55 V46.45 M25 44.4 V47.6 M26 45.55 V46.45 M27 45.55 V46.45 M28 45.55 V46.45 M29 45.55 V46.45 M30 44.4 V47.6 M31 45.55 V46.45 M32 45.55 V46.45 M33 45.55 V46.45 M34 45.55 V46.45 M35 44.4 V47.6 M36 45.55 V46.45 M37 45.55 V46.45 M38 45.55 V46.45 M39 45.55 V46.45 M40 44.4 V47.6 M41 45.55 V46.45 M42 45.55 V46.45 M43 45.55 V46.45 M44 45.55 V46.45 M45 44.4 V47.6 M46 45.55 V46.45 M47 45.55 V46.45 M48 45.55 V46.45 M49 45.55 V46.45 M50 44.4 V47.6 M51 45.55 V46.45 M52 45.55 V46.45 M53 45.55 V46.45 M54 45.55 V46.45 M55 44.4 V47.6 M56 45.55 V46.45 M57 45.55 V46.45 M58 45.55 V46.45 M59 45.55 V46.45 M60 44.4 V47.6 M61 45.55 V46.45 " stroke="#e98c1c" stroke-width="0.8" opacity="0.9"/></svg>
<div class="t" style="left:337px;width:83px;text-align:center;top:643px;font-size:7.4px;color:#1e1e1e">Run_on_grit</div>
<div class="a" style="left:892px;top:22px;width:358px;height:13px;background:#a5a5a5;"></div>
<div class="a" style="left:892px;top:22px;width:63px;height:13px;background:#cbcbcb;"></div>
<svg style="left:897px;top:25px" width="8" height="8" viewBox="0 0 8 8"><circle cx="4" cy="4" r="3.8" fill="#444"/><rect x="3.4" y="3.4" width="1.3" height="3" fill="#ddd"/><circle cx="4" cy="2.2" r="0.7" fill="#ddd"/></svg>
<div class="t" style="left:908px;top:24.8px;font-size:8.5px;color:#1e1e1e;">Inspector</div>
<div class="t" style="left:961px;top:24.8px;font-size:8.5px;color:#1e1e1e;">Tile Palette</div>
<svg style="left:1227px;top:23.5px" width="7" height="9" viewBox="0 0 7 9"><path d="M1.4 3.2 a2 1.9 0 0 1 4 0 V5.2" fill="none" stroke="#666" stroke-width="1"/><path d="M0.9 4.9 H5.9 V6.4 a1.6 1.4 0 0 1 -1.6 1.4 H2.5 a1.6 1.4 0 0 1 -1.6 -1.4 Z" fill="none" stroke="#666" stroke-width="1"/><path d="M2.2 6.3 H4.6" stroke="#666" stroke-width="0.8"/></svg>
<svg style="left:1241px;top:24px" width="3" height="10" viewBox="0 0 3 10"><circle cx="1.5" cy="2" r="0.85" fill="#555"/><circle cx="1.5" cy="4.8" r="0.85" fill="#555"/><circle cx="1.5" cy="7.6" r="0.85" fill="#555"/></svg>
<div class="a" style="left:892px;top:35px;width:358px;height:40px;background:#cbcbcb;"></div>
<svg style="left:896px;top:42px" width="15" height="17" viewBox="0 0 15 17"><g fill="none" stroke="#595959" stroke-width="1.25" stroke-linejoin="round"><path d="M7.2 0.8 L13.6 3.8 V10.4 L7.2 13.6 L0.8 10.4 V3.8Z M0.8 3.8 L7.2 6.9 L13.6 3.8 M7.2 6.9 V13.6"/></g><path d="M10.8 15 L14.8 15 L12.8 17.2Z" fill="#333"/></svg>
<div class="a" style="left:923px;top:43px;width:10px;height:10px;background:#f2f2f2;border:1px solid #bdbdbd;border-radius:2px"></div>
<svg style="left:925px;top:45px" width="7" height="6" viewBox="0 0 7 6"><path d="M0.6 3 L2.6 5 L6.4 0.8" fill="none" stroke="#222" stroke-width="1"/></svg>
<div class="a" style="left:937px;top:42px;width:267px;height:11px;background:#f0f0f0;border:1px solid #bababa;border-radius:2px"></div>
<div class="t" style="left:940px;top:42.5px;font-size:8.2px;color:#111;font-weight:bold;">BackgroundMusic</div>
<div class="a" style="left:1206.5px;top:42.5px;width:9.5px;height:9.5px;background:#ececec;border:1px solid #bababa;border-radius:2px"></div>
<div class="t" style="left:1218px;top:42.5px;font-size:8.5px;color:#1e1e1e;">Static</div>
<svg style="left:1242px;top:45px" width="4.8" height="4.8" viewBox="0 0 4.8 4.8"><path d="M0 0.96 L4.8 0.96 L2.4 4.08 Z" fill="#444"/></svg>
<div class="t" style="left:921px;top:59px;font-size:8.5px;color:#4a4a4a;">Tag</div>
<div class="a" style="left:938px;top:58px;width:141px;height:11px;background:#dedede;border:1px solid #b8b8b8;border-radius:2px"></div>
<div class="t" style="left:941px;top:58.5px;font-size:8.5px;color:#1e1e1e;">Untagged</div>
<svg style="left:1070px;top:61px" width="4.8" height="4.8" viewBox="0 0 4.8 4.8"><path d="M0 0.96 L4.8 0.96 L2.4 4.08 Z" fill="#444"/></svg>
<div class="t" style="left:1090px;top:59px;font-size:8.5px;color:#4a4a4a;">Layer</div>
<div class="a" style="left:1115px;top:58px;width:135px;height:11px;background:#dedede;border:1px solid #b8b8b8;border-radius:2px"></div>
<div class="t" style="left:1118px;top:58.5px;font-size:8.5px;color:#1e1e1e;">Default</div>
<svg style="left:1239.5px;top:61px" width="4.8" height="4.8" viewBox="0 0 4.8 4.8"><path d="M0 0.96 L4.8 0.96 L2.4 4.08 Z" fill="#444"/></svg>
<div class="a" style="left:892px;top:75px;width:358px;height:1px;background:#9e9e9e;"></div>
<div class="a" style="left:892px;top:76px;width:358px;height:14px;background:#cbcbcb;"></div>
<svg style="left:896px;top:79px" width="6.4" height="6.4" viewBox="0 0 6.4 6.4"><path d="M0 1.2800000000000002 L6.4 1.2800000000000002 L3.2 5.44 Z" fill="#777"/></svg>
<svg style="left:906px;top:78px" width="11" height="10" viewBox="0 0 11 10"><path d="M5.5 1 V5" stroke="#3a9a3a" stroke-width="1.2"/><path d="M5.5 5 L1.5 8" stroke="#2a6fd6" stroke-width="1.4"/><path d="M5.5 5 L9.5 8" stroke="#d33" stroke-width="1.4"/></svg>
<div class="t" style="left:933px;top:78px;font-size:8.5px;color:#111;font-weight:bold;">Transform</div>
<svg style="left:1211px;top:79px" width="8" height="8" viewBox="0 0 8 8"><circle cx="4" cy="4" r="3.8" fill="#444"/><path d="M2.8 3 A1.3 1.3 0 1 1 4.3 4.3 V5" fill="none" stroke="#ddd" stroke-width="0.9"/><circle cx="4.2" cy="6.3" r="0.5" fill="#ddd"/></svg>
<svg style="left:1226px;top:79px" width="9" height="8" viewBox="0 0 9 8"><path d="M0.5 2.5 H8.5 M0.5 5.5 H8.5" stroke="#555" stroke-width="0.9"/><rect x="5" y="1" width="2" height="3" fill="#555"/><rect x="2" y="4" width="2" height="3" fill="#555"/></svg>
<svg style="left:1241px;top:78px" width="3" height="10" viewBox="0 0 3 10"><circle cx="1.5" cy="2" r="0.85" fill="#444"/><circle cx="1.5" cy="4.8" r="0.85" fill="#444"/><circle cx="1.5" cy="7.6" r="0.85" fill="#444"/></svg>
<div class="a" style="left:892px;top:90px;width:358px;height:1px;background:#b4b4b4;"></div>
<div class="t" style="left:905px;top:94.5px;font-size:8.5px;color:#222;">Position</div>
<div class="t" style="left:1040px;top:94.5px;font-size:8.5px;color:#222;">X</div>
<div class="a" style="left:1048px;top:94.0px;width:60px;height:11px;background:#efefef;border:1px solid #b8b8b8;border-radius:2px"></div>
<div class="t" style="left:1051px;top:94.5px;font-size:8.5px;color:#111;">0</div>
<div class="t" style="left:1112px;top:94.5px;font-size:8.5px;color:#222;">Y</div>
<div class="a" style="left:1119px;top:94.0px;width:59px;height:11px;background:#efefef;border:1px solid #b8b8b8;border-radius:2px"></div>
<div class="t" style="left:1122px;top:94.5px;font-size:8.5px;color:#111;">0</div>
<div class="t" style="left:1183px;top:94.5px;font-size:8.5px;color:#222;">Z</div>
<div class="a" style="left:1191px;top:94.0px;width:59px;height:11px;background:#efefef;border:1px solid #b8b8b8;border-radius:2px"></div>
<div class="t" style="left:1194px;top:94.5px;font-size:8.5px;color:#111;">0</div>
<div class="t" style="left:905px;top:109.5px;font-size:8.5px;color:#222;">Rotation</div>
<div class="t" style="left:1040px;top:109.5px;font-size:8.5px;color:#222;">X</div>
<div class="a" style="left:1048px;top:109.0px;width:60px;height:11px;background:#efefef;border:1px solid #b8b8b8;border-radius:2px"></div>
<div class="t" style="left:1051px;top:109.5px;font-size:8.5px;color:#111;">0</div>
<div class="t" style="left:1112px;top:109.5px;font-size:8.5px;color:#222;">Y</div>
<div class="a" style="left:1119px;top:109.0px;width:59px;height:11px;background:#efefef;border:1px solid #b8b8b8;border-radius:2px"></div>
<div class="t" style="left:1122px;top:109.5px;font-size:8.5px;color:#111;">0</div>
<div class="t" style="left:1183px;top:109.5px;font-size:8.5px;color:#222;">Z</div>
<div class="a" style="left:1191px;top:109.0px;width:59px;height:11px;background:#efefef;border:1px solid #b8b8b8;border-radius:2px"></div>
<div class="t" style="left:1194px;top:109.5px;font-size:8.5px;color:#111;">0</div>
<div class="t" style="left:905px;top:123.5px;font-size:8.5px;color:#222;">Scale</div>
<div class="t" style="left:1040px;top:123.5px;font-size:8.5px;color:#222;">X</div>
<div class="a" style="left:1048px;top:123.0px;width:60px;height:11px;background:#efefef;border:1px solid #b8b8b8;border-radius:2px"></div>
<div class="t" style="left:1051px;top:123.5px;font-size:8.5px;color:#111;">1</div>
<div class="t" style="left:1112px;top:123.5px;font-size:8.5px;color:#222;">Y</div>
<div class="a" style="left:1119px;top:123.0px;width:59px;height:11px;background:#efefef;border:1px solid #b8b8b8;border-radius:2px"></div>
<div class="t" style="left:1122px;top:123.5px;font-size:8.5px;color:#111;">1</div>
<div class="t" style="left:1183px;top:123.5px;font-size:8.5px;color:#222;">Z</div>
<div class="a" style="left:1191px;top:123.0px;width:59px;height:11px;background:#efefef;border:1px solid #b8b8b8;border-radius:2px"></div>
<div class="t" style="left:1194px;top:123.5px;font-size:8.5px;color:#111;">1</div>
<div class="a" style="left:892px;top:139px;width:358px;height:2px;background:#a3a3a3;"></div>
<div class="a" style="left:892px;top:141px;width:358px;height:14px;background:#cbcbcb;"></div>
<svg style="left:896px;top:144.5px" width="6.4" height="6.4" viewBox="0 0 6.4 6.4"><path d="M0 1.2800000000000002 L6.4 1.2800000000000002 L3.2 5.44 Z" fill="#777"/></svg>
<svg style="left:905px;top:144px" width="10" height="8" viewBox="0 0 10 8"><path d="M0.5 2.5 H3 L6.5 0 V8 L3 5.5 H0.5Z" fill="#e9a52a"/><path d="M8 2 Q9.5 4 8 6" fill="none" stroke="#e9a52a" stroke-width="0.9"/></svg>
<div class="a" style="left:919px;top:143px;width:10px;height:10px;background:#f2f2f2;border:1px solid #bdbdbd;border-radius:2px"></div>
<svg style="left:921px;top:145px" width="7" height="6" viewBox="0 0 7 6"><path d="M0.6 3 L2.6 5 L6.4 0.8" fill="none" stroke="#222" stroke-width="1"/></svg>
<div class="t" style="left:933px;top:143.5px;font-size:8.5px;color:#111;font-weight:bold;">Audio Source</div>
<svg style="left:1211px;top:144px" width="8" height="8" viewBox="0 0 8 8"><circle cx="4" cy="4" r="3.8" fill="#444"/><path d="M2.8 3 A1.3 1.3 0 1 1 4.3 4.3 V5" fill="none" stroke="#ddd" stroke-width="0.9"/><circle cx="4.2" cy="6.3" r="0.5" fill="#ddd"/></svg>
<svg style="left:1226px;top:144px" width="9" height="8" viewBox="0 0 9 8"><path d="M0.5 2.5 H8.5 M0.5 5.5 H8.5" stroke="#555" stroke-width="0.9"/><rect x="5" y="1" width="2" height="3" fill="#555"/><rect x="2" y="4" width="2" height="3" fill="#555"/></svg>
<svg style="left:1241px;top:143px" width="3" height="10" viewBox="0 0 3 10"><circle cx="1.5" cy="2" r="0.85" fill="#444"/><circle cx="1.5" cy="4.8" r="0.85" fill="#444"/><circle cx="1.5" cy="7.6" r="0.85" fill="#444"/></svg>
<div class="a" style="left:892px;top:155px;width:358px;height:1px;background:#b8b8b8;"></div>
<div class="t" style="left:905px;top:160px;font-size:8.5px;color:#222;">AudioClip</div>
<div class="a" style="left:1041px;top:159px;width:209px;height:12px;background:#eeeeee;border:1px solid #bababa;border-radius:2px"></div>
<svg style="left:1043px;top:161px" width="6" height="7" viewBox="0 0 6 7"><path d="M1.5 6 V1 L5 0.3 V5" fill="none" stroke="#d49a1a" stroke-width="0.9"/><circle cx="1.2" cy="6" r="1" fill="#d49a1a"/><circle cx="4.7" cy="5" r="1" fill="#d49a1a"/></svg>
<div class="t" style="left:1051px;top:160px;font-size:8.5px;color:#111;">Bit_Symphony</div>
<svg style="left:1238px;top:161px" width="8" height="8" viewBox="0 0 8 8"><circle cx="4" cy="4" r="3.2" fill="none" stroke="#555" stroke-width="0.8"/><circle cx="4" cy="4" r="1.3" fill="#555"/></svg>
<div class="t" style="left:905px;top:179.5px;font-size:8.5px;color:#222;">Output</div>
<div class="a" style="left:1041px;top:178px;width:209px;height:12px;background:#eeeeee;border:1px solid #bababa;border-radius:2px"></div>
<div class="t" style="left:1043px;top:179.5px;font-size:8.5px;color:#111;">None (Audio Mixer Group)</div>
<svg style="left:1238px;top:180.5px" width="8" height="8" viewBox="0 0 8 8"><circle cx="4" cy="4" r="3.2" fill="none" stroke="#555" stroke-width="0.8"/><circle cx="4" cy="4" r="1.3" fill="#555"/></svg>
<div class="t" style="left:905px;top:192.8px;font-size:8.5px;color:#222;">Mute</div>
<div class="a" style="left:1041px;top:192.8px;width:9px;height:9px;background:#eeeeee;border:1px solid #bababa;border-radius:2px"></div>
<div class="t" style="left:905px;top:206.55px;font-size:8.5px;color:#222;">Bypass Effects</div>
<div class="a" style="left:1041px;top:206.55px;width:9px;height:9px;background:#eeeeee;border:1px solid #bababa;border-radius:2px"></div>
<div class="t" style="left:905px;top:220.3px;font-size:8.5px;color:#222;">Bypass Listener Effects</div>
<div class="a" style="left:1041px;top:220.3px;width:9px;height:9px;background:#eeeeee;border:1px solid #bababa;border-radius:2px"></div>
<div class="t" style="left:905px;top:234.05px;font-size:8.5px;color:#222;">Bypass Reverb Zones</div>
<div class="a" style="left:1041px;top:234.05px;width:9px;height:9px;background:#eeeeee;border:1px solid #bababa;border-radius:2px"></div>
<div class="t" style="left:905px;top:247.8px;font-size:8.5px;color:#222;">Play On Awake</div>
<div class="a" style="left:1041px;top:247.8px;width:9px;height:9px;background:#eeeeee;border:1px solid #bababa;border-radius:2px"></div>
<div class="t" style="left:905px;top:261.55px;font-size:8.5px;color:#222;">Loop</div>
<div class="a" style="left:1041px;top:261.55px;width:9px;height:9px;background:#eeeeee;border:1px solid #bababa;border-radius:2px"></div>
<svg style="left:1042.5px;top:263.55px" width="7" height="6" viewBox="0 0 7 6"><path d="M0.6 3 L2.6 5 L6.4 0.8" fill="none" stroke="#222" stroke-width="1"/></svg>
<div class="t" style="left:905px;top:281px;font-size:8.5px;color:#222;">Priority</div>
<div class="a" style="left:1041px;top:285.0px;width:170px;height:1px;background:#8a8a8a;"></div>
<svg style="left:1122px;top:281.5px" width="8" height="8" viewBox="0 0 8 8"><circle cx="4" cy="4" r="3.6" fill="#5e5e5e"/></svg>
<div class="a" style="left:1215px;top:279.5px;width:35px;height:12px;background:#f2f2f2;border:1px solid #bababa;border-radius:2px"></div>
<div class="t" style="left:1218px;top:280.5px;font-size:8.5px;color:#111;">128</div>
<div class="t" style="left:1042px;top:288.0px;font-size:7px;color:#7a7a7a;">High</div>
<div class="t" style="right:40px;top:288.0px;font-size:7px;color:#7a7a7a;">Low</div>
<div class="t" style="left:905px;top:300px;font-size:8.5px;color:#222;">Volume</div>
<div class="a" style="left:1041px;top:304.0px;width:170px;height:1px;background:#8a8a8a;"></div>
<svg style="left:1041.5px;top:300.5px" width="8" height="8" viewBox="0 0 8 8"><circle cx="4" cy="4" r="3.6" fill="#5e5e5e"/></svg>
<div class="a" style="left:1215px;top:298.5px;width:35px;height:12px;background:#f2f2f2;border:1px solid #bababa;border-radius:2px"></div>
<div class="t" style="left:1218px;top:299.5px;font-size:8.5px;color:#111;">0.011</div>
<div class="t" style="left:905px;top:319px;font-size:8.5px;color:#222;">Pitch</div>
<div class="a" style="left:1041px;top:323.0px;width:170px;height:1px;background:#8a8a8a;"></div>
<svg style="left:1149px;top:319.5px" width="8" height="8" viewBox="0 0 8 8"><circle cx="4" cy="4" r="3.6" fill="#5e5e5e"/></svg>
<div class="a" style="left:1215px;top:317.5px;width:35px;height:12px;background:#f2f2f2;border:1px solid #bababa;border-radius:2px"></div>
<div class="t" style="left:1218px;top:318.5px;font-size:8.5px;color:#111;">1</div>
<div class="t" style="left:905px;top:338px;font-size:8.5px;color:#222;">Stereo Pan</div>
<div class="a" style="left:1041px;top:342.0px;width:170px;height:1px;background:#8a8a8a;"></div>
<svg style="left:1122px;top:338.5px" width="8" height="8" viewBox="0 0 8 8"><circle cx="4" cy="4" r="3.6" fill="#5e5e5e"/></svg>
<div class="a" style="left:1215px;top:336.5px;width:35px;height:12px;background:#f2f2f2;border:1px solid #bababa;border-radius:2px"></div>
<div class="t" style="left:1218px;top:337.5px;font-size:8.5px;color:#111;">0</div>
<div class="t" style="left:1042px;top:345.0px;font-size:7px;color:#7a7a7a;">Left</div>
<div class="t" style="right:40px;top:345.0px;font-size:7px;color:#7a7a7a;">Right</div>
<div class="t" style="left:905px;top:357px;font-size:8.5px;color:#222;">Spatial Blend</div>
<div class="a" style="left:1041px;top:361.0px;width:170px;height:1px;background:#8a8a8a;"></div>
<svg style="left:1039.5px;top:357.5px" width="8" height="8" viewBox="0 0 8 8"><circle cx="4" cy="4" r="3.6" fill="#5e5e5e"/></svg>
<div class="a" style="left:1215px;top:355.5px;width:35px;height:12px;background:#f2f2f2;border:1px solid #bababa;border-radius:2px"></div>
<div class="t" style="left:1218px;top:356.5px;font-size:8.5px;color:#111;">0</div>
<div class="t" style="left:1042px;top:364.0px;font-size:7px;color:#7a7a7a;">2D</div>
<div class="t" style="right:40px;top:364.0px;font-size:7px;color:#7a7a7a;">3D</div>
<div class="t" style="left:905px;top:376.5px;font-size:8.5px;color:#222;">Reverb Zone Mix</div>
<div class="a" style="left:1041px;top:380.5px;width:170px;height:1px;background:#8a8a8a;"></div>
<svg style="left:1189px;top:377px" width="8" height="8" viewBox="0 0 8 8"><circle cx="4" cy="4" r="3.6" fill="#5e5e5e"/></svg>
<div class="a" style="left:1215px;top:375px;width:35px;height:12px;background:#f2f2f2;border:1px solid #bababa;border-radius:2px"></div>
<div class="t" style="left:1218px;top:376px;font-size:8.5px;color:#111;">1</div>
<svg style="left:897px;top:397px" width="6.4" height="6.4" viewBox="0 0 6.4 6.4"><path d="M1.2800000000000002 0 L5.44 3.2 L1.2800000000000002 6.4 Z" fill="#777"/></svg>
<div class="t" style="left:905px;top:396px;font-size:8.5px;color:#222;">3D Sound Settings</div>
<div class="a" style="left:892px;top:411px;width:358px;height:1px;background:#a5a5a5;"></div>
<div class="a" style="left:994px;top:418px;width:156px;height:15px;background:#e4e4e4;border:1px solid #b5b5b5;border-radius:2px;box-shadow:0 1px 0 #999"></div>
<div class="t" style="left:994px;width:156px;text-align:center;top:420.5px;font-size:8.5px;color:#1e1e1e">Add Component</div>
<div class="a" style="left:173px;top:22px;width:2px;height:505px;background:#959595;"></div>
<div class="a" style="left:890px;top:22px;width:2px;height:682px;background:#959595;"></div>
</div></body></html>
